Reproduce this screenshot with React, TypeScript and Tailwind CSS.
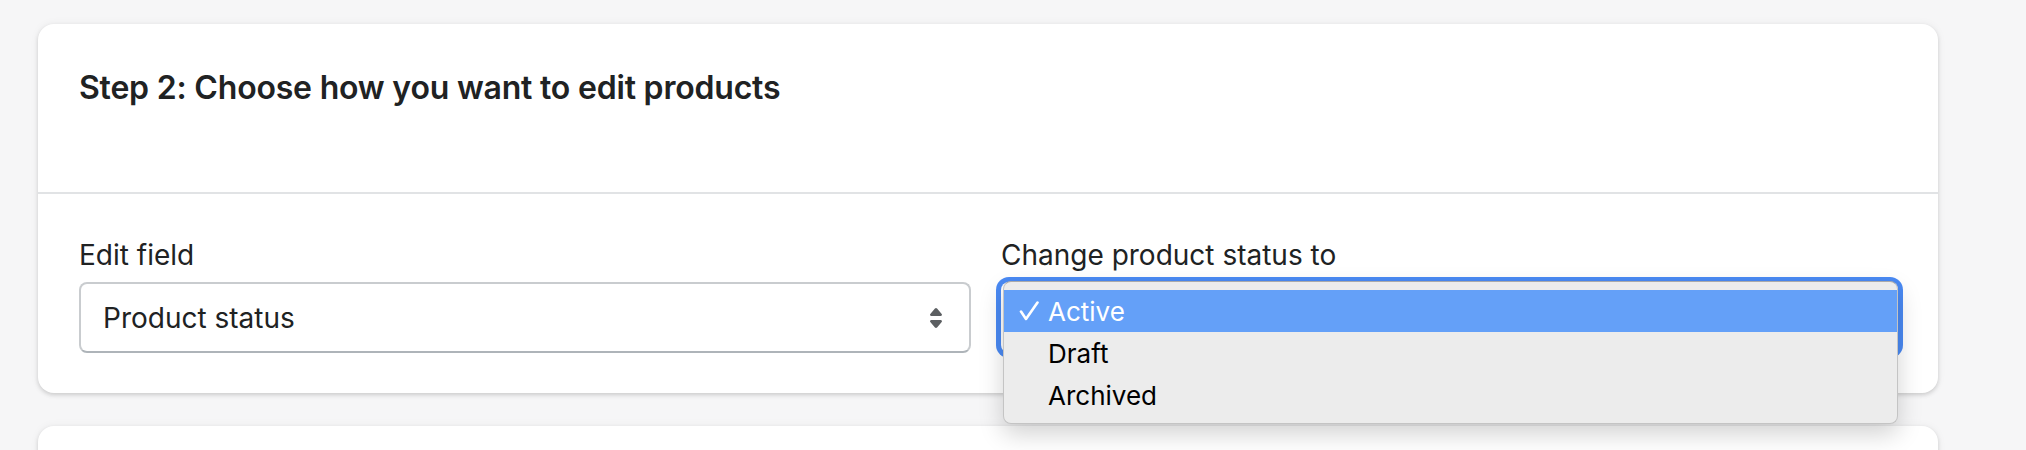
import React from "react"

const font = { fontFamily: "Inter, 'Noto Sans', sans-serif" }

function SelectArrows() {
  return (
    <svg width="40" height="40" viewBox="0 0 20 20" fill="#5c5f62">
      <path d="M7.676 9h4.648c.563 0 .879-.603.53-1.014l-2.323-2.746a.708.708 0 0 0-1.062 0l-2.324 2.746c-.347.411-.032 1.014.531 1.014Zm4.648 2h-4.648c-.563 0-.878.603-.53 1.014l2.323 2.746c.281.332.78.332 1.062 0l2.323-2.746c.349-.411.033-1.014-.53-1.014Z" />
    </svg>
  )
}

function Check() {
  return (
    <svg width="20" height="20" viewBox="0 0 20 20" fill="none" stroke="#ffffff" strokeWidth="2.6" strokeLinecap="round" strokeLinejoin="round">
      <path d="M2 10.5 L7 18 L18.5 1.5" />
    </svg>
  )
}

const options = ["Active", "Draft", "Archived"]

export default function App() {
  return (
    <div className="h-[450px] w-full overflow-hidden bg-[#f6f6f7] pt-[24px] pl-[38px]" style={font}>
      <div className="w-[1900px] rounded-[16px] bg-white shadow-[0_0_10px_rgba(23,24,24,0.05),0_2px_4px_rgba(0,0,0,0.15)]">
        <div className="border-b-2 border-[#e1e3e5] pl-[41px] pr-10 pt-[44px] pb-[84px]">
          <h2 className="text-[32px] leading-[40px] font-semibold tracking-[-0.2px] text-[#202223]">
            Step 2: Choose how you want to edit products
          </h2>
        </div>
        <div className="grid grid-cols-[892px_1fr] gap-[30px] pl-[41px] pr-10 pt-[41px] pb-10">
          <div>
            <div className="mb-[7px] text-[28px] leading-[40px] text-[#202223]">Edit field</div>
            <div className="flex h-[71px] items-center justify-between rounded-[8px] border-2 border-[#c9cccf] border-b-[#aeb4b9] bg-white pl-[22px] pr-[13px]">
              <span className="text-[28px] text-[#202223]">Product status</span>
              <SelectArrows />
            </div>
          </div>
          <div>
            <div className="mb-[7px] text-[28px] leading-[40px] text-[#202223]">Change product status to</div>
            <div className="relative h-[71px] rounded-[8px] bg-white shadow-[0_0_0_5px_#4a8af4]">
              <div className="absolute left-[2px] right-0 top-[-1px] z-10 h-[143px] rounded-[8px] border border-[#c4c4c4] border-t-[#aaaaaa] bg-[#ececec] pt-[8px] shadow-[0_10px_24px_rgba(0,0,0,0.18)]">
                {options.map((opt, i) => (
                  <div
                    key={opt}
                    className={`flex h-[42px] items-center pl-[15px] text-[26px] ${i === 0 ? "bg-[#64a0f8] text-white" : "text-black"}`}
                  >
                    <span className="flex w-[29px] items-center">{i === 0 && <Check />}</span>
                    <span>{opt}</span>
                  </div>
                ))}
              </div>
            </div>
          </div>
        </div>
      </div>
      <div className="mt-[33px] h-[120px] w-[1900px] rounded-[16px] bg-white shadow-[0_0_10px_rgba(23,24,24,0.05),0_2px_4px_rgba(0,0,0,0.15)]" />
    </div>
  )
}
